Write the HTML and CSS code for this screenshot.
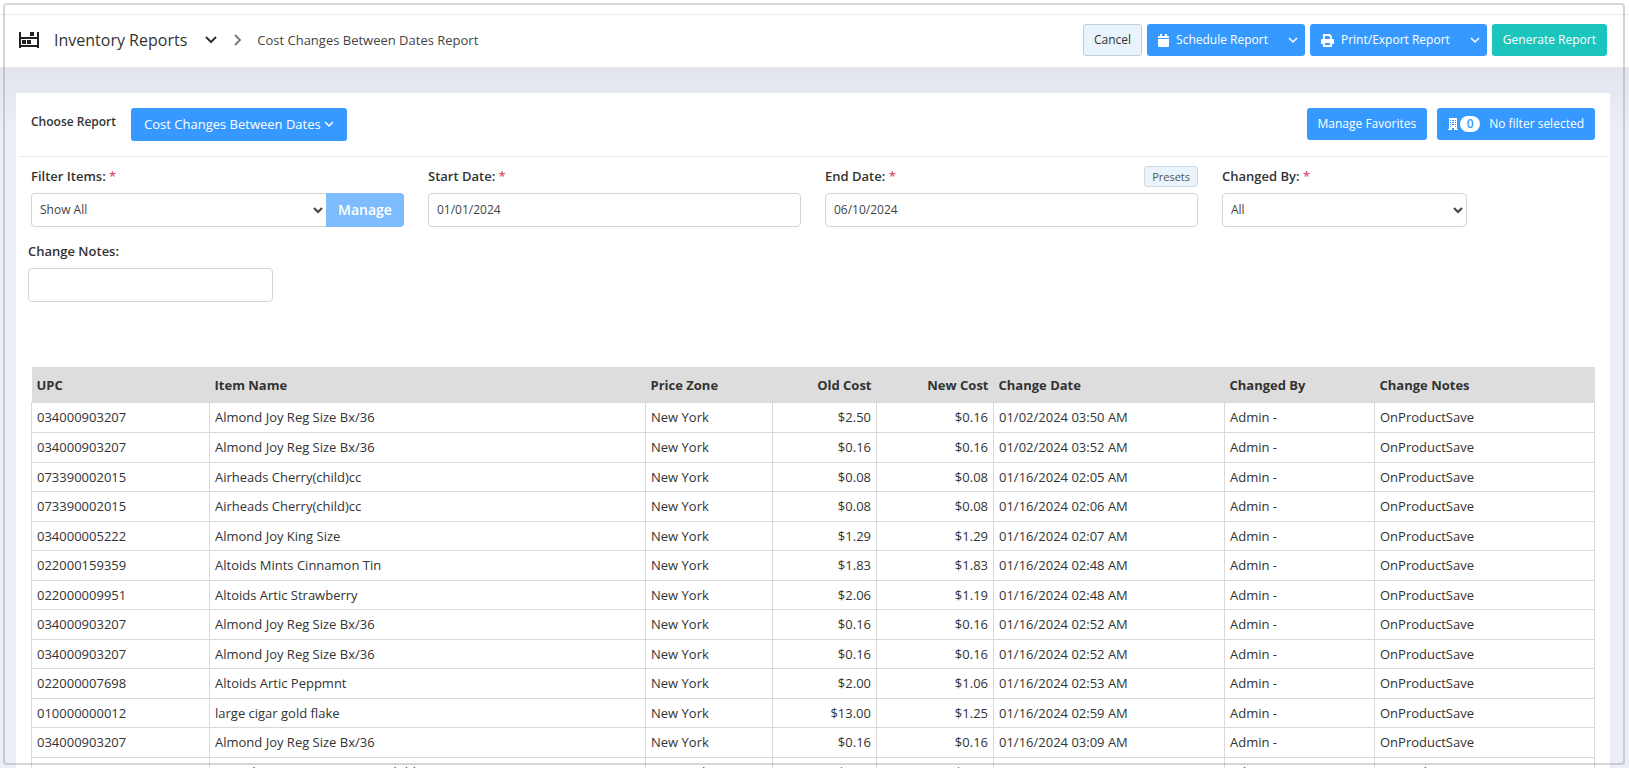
FILE: index.html
```html
<!DOCTYPE html>
<html lang="en">
<head>
<meta charset="utf-8">
<title>Cost Changes Between Dates Report</title>
<link rel="stylesheet" href="styles.css">
</head>
<body>
<header class="topbar">
  <nav class="crumbs" aria-label="Breadcrumb">
    <svg class="shelf-icon" viewBox="0 0 20 16" aria-hidden="true"><path d="M0 0h2v16H0zM18 0h2v16h-2zM2 5h16v2H2zM2 13h16v2H2zM11 0h4v4h-4zM3 8h4v4H3zM8 8h4v4H8z"/></svg>
    <button class="section-menu" type="button">Inventory Reports
      <svg class="chev-lg" viewBox="0 0 12 8" aria-hidden="true"><path d="M1 1l5 5 5-5"/></svg>
    </button>
    <svg class="crumb-sep" viewBox="0 0 8 12" aria-hidden="true"><path d="M1 1l5 5-5 5"/></svg>
    <span class="crumb-current">Cost Changes Between Dates Report</span>
  </nav>
  <div class="actions">
    <button class="btn btn-light" type="button">Cancel</button>
    <div class="split">
      <button class="btn btn-primary" type="button"><svg class="icon" viewBox="0 0 11 13" aria-hidden="true"><path d="M2 0h2v2h3V0h2v2h1q1 0 1 1v1H0V3q0-1 1-1h1zM0 5h11v7q0 1-1 1H1q-1 0-1-1z"/></svg>Schedule Report</button>
      <button class="btn btn-primary btn-caret" type="button" aria-label="Schedule options"><svg class="chev" viewBox="0 0 10 8" aria-hidden="true"><path d="M1 2l4 4 4-4"/></svg></button>
    </div>
    <div class="split">
      <button class="btn btn-primary" type="button"><svg class="icon icon-print" viewBox="0 0 13 13" aria-hidden="true"><path fill-rule="evenodd" d="M2 0h7l2 2v3h1q1 0 1 1v4h-2v3H2v-3H0V6q0-1 1-1h1zM4 2v3h5V3H8V2zM4 9v2h5V9z"/></svg>Print/Export Report</button>
      <button class="btn btn-primary btn-caret" type="button" aria-label="Export options"><svg class="chev" viewBox="0 0 10 8" aria-hidden="true"><path d="M1 2l4 4 4-4"/></svg></button>
    </div>
    <button class="btn btn-success" type="button">Generate Report</button>
  </div>
</header>
<main class="page">
  <section class="card">
    <div class="chooser">
      <span class="chooser-label">Choose Report</span>
      <button class="btn btn-primary btn-report" type="button">Cost Changes Between Dates<svg class="chev" viewBox="0 0 10 8" aria-hidden="true"><path d="M1 2l4 4 4-4"/></svg></button>
      <div class="chooser-right">
        <button class="btn btn-primary" type="button">Manage Favorites</button>
        <button class="btn btn-primary" type="button"><svg class="icon-building" viewBox="0 0 10 12" aria-hidden="true"><path fill-rule="evenodd" d="M1 0h8v11h1v1H6v-2H4v2H0v-1h1zM2 2v1h1V2zM4 2v1h2V2zM7 2v1h1V2zM2 4v1h1V4zM4 4v1h2V4zM7 4v1h1V4zM2 6v1h1V6zM4 6v1h2V6zM7 6v1h1V6zM2 8v1h1V8zM7 8v1h1V8z"/></svg><span class="badge">0</span>No filter selected</button>
      </div>
    </div>
    <form class="filters">
      <div class="field">
        <div class="label-row"><label for="items">Filter Items: <span class="req">*</span></label></div>
        <div class="joined"><select class="control" id="items"><option>Show All</option></select><button class="btn-manage" type="button" disabled>Manage</button></div>
      </div>
      <div class="field">
        <div class="label-row"><label for="start">Start Date: <span class="req">*</span></label></div>
        <input class="control" id="start" type="text" value="01/01/2024">
      </div>
      <div class="field">
        <div class="label-row"><label for="end">End Date: <span class="req">*</span></label><button class="btn-presets" type="button">Presets</button></div>
        <input class="control" id="end" type="text" value="06/10/2024">
      </div>
      <div class="field">
        <div class="label-row"><label for="by">Changed By: <span class="req">*</span></label></div>
        <select class="control" id="by"><option>All</option></select>
      </div>
    </form>
    <div class="field notes">
      <div class="label-row"><label for="notes">Change Notes:</label></div>
      <input class="control" id="notes" type="text">
    </div>
    <table class="report">
      <colgroup><col class="c-upc"><col><col class="c-zone"><col class="c-old"><col class="c-new"><col class="c-date"><col class="c-by"><col class="c-notes"></colgroup>
      <thead><tr><th>UPC</th><th>Item Name</th><th>Price Zone</th><th class="num">Old Cost</th><th class="num">New Cost</th><th>Change Date</th><th>Changed By</th><th>Change Notes</th></tr></thead>
      <tbody>
        <tr><td>034000903207</td><td>Almond Joy Reg Size Bx/36</td><td>New York</td><td class="num">$2.50</td><td class="num">$0.16</td><td>01/02/2024 03:50 AM</td><td>Admin -</td><td>OnProductSave</td></tr>
        <tr><td>034000903207</td><td>Almond Joy Reg Size Bx/36</td><td>New York</td><td class="num">$0.16</td><td class="num">$0.16</td><td>01/02/2024 03:52 AM</td><td>Admin -</td><td>OnProductSave</td></tr>
        <tr><td>073390002015</td><td>Airheads Cherry(child)cc</td><td>New York</td><td class="num">$0.08</td><td class="num">$0.08</td><td>01/16/2024 02:05 AM</td><td>Admin -</td><td>OnProductSave</td></tr>
        <tr><td>073390002015</td><td>Airheads Cherry(child)cc</td><td>New York</td><td class="num">$0.08</td><td class="num">$0.08</td><td>01/16/2024 02:06 AM</td><td>Admin -</td><td>OnProductSave</td></tr>
        <tr><td>034000005222</td><td>Almond Joy King Size</td><td>New York</td><td class="num">$1.29</td><td class="num">$1.29</td><td>01/16/2024 02:07 AM</td><td>Admin -</td><td>OnProductSave</td></tr>
        <tr><td>022000159359</td><td>Altoids Mints Cinnamon Tin</td><td>New York</td><td class="num">$1.83</td><td class="num">$1.83</td><td>01/16/2024 02:48 AM</td><td>Admin -</td><td>OnProductSave</td></tr>
        <tr><td>022000009951</td><td>Altoids Artic Strawberry</td><td>New York</td><td class="num">$2.06</td><td class="num">$1.19</td><td>01/16/2024 02:48 AM</td><td>Admin -</td><td>OnProductSave</td></tr>
        <tr><td>034000903207</td><td>Almond Joy Reg Size Bx/36</td><td>New York</td><td class="num">$0.16</td><td class="num">$0.16</td><td>01/16/2024 02:52 AM</td><td>Admin -</td><td>OnProductSave</td></tr>
        <tr><td>034000903207</td><td>Almond Joy Reg Size Bx/36</td><td>New York</td><td class="num">$0.16</td><td class="num">$0.16</td><td>01/16/2024 02:52 AM</td><td>Admin -</td><td>OnProductSave</td></tr>
        <tr><td>022000007698</td><td>Altoids Artic Peppmnt</td><td>New York</td><td class="num">$2.00</td><td class="num">$1.06</td><td>01/16/2024 02:53 AM</td><td>Admin -</td><td>OnProductSave</td></tr>
        <tr><td>010000000012</td><td>large cigar gold flake</td><td>New York</td><td class="num">$13.00</td><td class="num">$1.25</td><td>01/16/2024 02:59 AM</td><td>Admin -</td><td>OnProductSave</td></tr>
        <tr><td>034000903207</td><td>Almond Joy Reg Size Bx/36</td><td>New York</td><td class="num">$0.16</td><td class="num">$0.16</td><td>01/16/2024 03:09 AM</td><td>Admin -</td><td>OnProductSave</td></tr>
        <tr><td>073390002015</td><td>Bazooka Super Gum Mango(child)cc</td><td>New York</td><td class="num">$0.08</td><td class="num">$0.08</td><td>01/16/2024 03:10 AM</td><td>Admin -</td><td>OnProductSave</td></tr>
      </tbody>
    </table>
  </section>
</main>
<div class="frame" aria-hidden="true"></div>
</body>
</html>
```
FILE: styles.css
```css
* { box-sizing: border-box; }
body {
  margin: 0;
  height: 100vh;
  overflow: hidden;
  padding-top: 14px;
  background: #fff;
  color: #333;
  font: 13px/20px "Open Sans", "Noto Sans", sans-serif;
}
button, input, select { font: inherit; color: inherit; }
button { cursor: pointer; white-space: nowrap; }

.topbar {
  display: flex;
  align-items: center;
  justify-content: space-between;
  height: 53px;
  padding: 0 22px 2px 19px;
  border-top: 1px solid #ececec;
}
.crumbs { display: flex; align-items: center; }
.shelf-icon { width: 20px; height: 16px; fill: #222; }
.section-menu {
  display: flex;
  align-items: center;
  gap: 18px;
  margin-left: 15px;
  padding: 0;
  border: 0;
  background: none;
  font-size: 16px;
}
.chev { width: 10px; height: 8px; fill: none; stroke: currentColor; stroke-width: 1.5; }
.chev-lg { width: 12px; height: 8px; fill: none; stroke: currentColor; stroke-width: 2; }
.crumb-sep { width: 8px; height: 12px; margin: 0 15px 0 17px; fill: none; stroke: #777; stroke-width: 1.8; }
.crumb-current { color: #444; }

.actions { display: flex; gap: 5px; }
.split { display: flex; }
.btn {
  display: flex;
  align-items: center;
  height: 32px;
  padding: 0 10px;
  border: 1px solid transparent;
  border-radius: 3px;
  font-size: 12px;
}
.btn-light { background: #e8f3fb; border-color: #c3ccd3; }
.btn-primary { background: #3699ff; color: #fff; }
.btn-success { background: #1bc5bd; color: #fff; }
.split .btn:first-child { border-radius: 3px 0 0 3px; }
.split .btn-caret { border-radius: 0 3px 3px 0; padding: 0 6px 0 8px; }
.icon { width: 11px; height: 13px; margin-right: 7px; fill: #fff; }
.icon-print { width: 13px; }

.page {
  min-height: 100%;
  padding: 26px 19px 0 16px;
  background: linear-gradient(#e3e4ee, #ebeef5 60px);
}
.card { background: #fff; border-radius: 2px; padding-bottom: 20px; }
.chooser {
  display: flex;
  align-items: center;
  margin: 0 2px;
  padding: 15px 13px;
  border-bottom: 1px solid #ebebeb;
}
.chooser-label { margin-right: 15px; padding-bottom: 5px; font-size: 12px; font-weight: 600; }
.btn-report { height: 33px; padding: 0 12px 1px; gap: 3px; font-size: 13px; }
.chooser-right { display: flex; align-self: flex-start; gap: 10px; margin-left: auto; }
.icon-building { width: 10px; height: 12px; fill: #fff; }
.badge {
  width: 20px;
  margin: 0 9px 0 2px;
  border-radius: 8px;
  background: #fff;
  color: #3699ff;
  font-weight: 600;
  line-height: 16px;
}

.filters {
  display: grid;
  grid-template-columns: 373fr 373fr 373fr 245fr 104fr;
  gap: 24px;
  padding: 9px 15px 0;
}
.field { display: flex; flex-direction: column; gap: 6px; min-width: 0; }
.label-row { display: flex; justify-content: space-between; align-items: center; height: 21px; }
.label-row label { padding-bottom: 2px; font-weight: 600; }
.req { color: #e0526b; }
.control {
  width: 100%;
  height: 34px;
  padding: 0 8px 1px;
  border: 1px solid #d5d5d5;
  border-radius: 4px;
  background: #fff;
  color: #444;
  font-size: 12px;
}
select.control { padding: 0 4px 1px; }
.joined { display: flex; }
.joined .control { flex: 1; border-radius: 4px 0 0 4px; border-right: 0; }
.btn-manage {
  width: 78px;
  border: 0;
  border-radius: 0 4px 4px 0;
  background: #7dbcfd;
  color: #fff;
  font-size: 14px;
  font-weight: 600;
}
.btn-presets {
  height: 21px;
  padding: 0 7px;
  border: 1px solid #d0dbe4;
  border-radius: 3px;
  background: #e8f3fb;
  color: #555;
  font-size: 11px;
  line-height: 18px;
}
.notes { width: 245px; margin: 14px 12px 0; }

.report {
  width: calc(100% - 30px);
  margin: 65px 15px 0;
  border-collapse: collapse;
  table-layout: fixed;
}
.c-upc { width: 178px; }
.c-zone { width: 127px; }
.c-old { width: 104px; }
.c-new { width: 117px; }
.c-date { width: 231px; }
.c-by { width: 150px; }
.c-notes { width: 220px; }
.report th { height: 35px; padding: 2px 5px 0; background: #ddd; text-align: left; font-weight: 700; }
.report td { height: 30px; padding: 0 5px; border: 1px solid #d9d9d9; }
.report tr:nth-child(4n+3) td,
.report tr:nth-child(5) td { height: 29px; }
.report tr:nth-child(9) td { height: 29px; }
.report .num { text-align: right; }

.frame {
  position: fixed;
  inset: 3px 4px 3px 3px;
  border: 2px solid rgba(120, 120, 120, .3);
  border-radius: 4px;
  pointer-events: none;
}
```
